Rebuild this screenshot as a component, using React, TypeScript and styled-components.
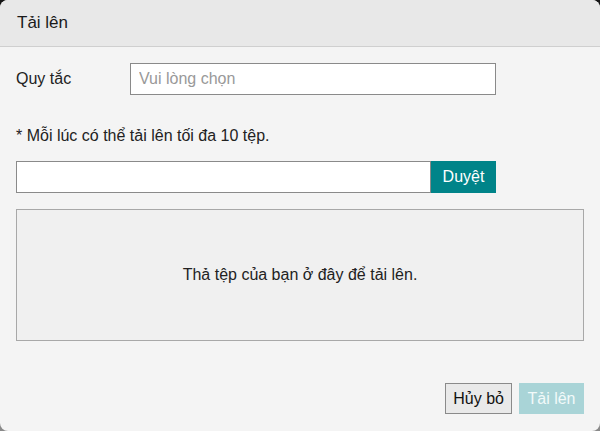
import React from "react";
import styled, { createGlobalStyle } from "styled-components";

const GlobalStyle = createGlobalStyle`
  html, body {
    margin: 0;
    padding: 0;
    background: linear-gradient(180deg, #151515 0%, #555 60%, #8a8a8a 100%);
    font-family: "Liberation Sans", Arial, sans-serif;
  }
  * {
    box-sizing: border-box;
  }
`;

const Dialog = styled.div`
  width: 600px;
  height: 431px;
  background-color: #f4f4f4;
  border-radius: 8px;
  overflow: hidden;
  display: flex;
  flex-direction: column;
  color: #222;
`;

const Header = styled.div`
  height: 47px;
  flex: none;
  display: flex;
  align-items: center;
  padding: 0 17px;
  background-color: #e8e8e8;
  border-bottom: 1px solid #cfcfcf;
  font-size: 17px;
  color: #1a1a1a;
`;

const Body = styled.div`
  flex: 1;
  padding: 16px 16px 0 16px;
  display: flex;
  flex-direction: column;
`;

const FieldRow = styled.div`
  display: flex;
  align-items: center;
  height: 32px;
`;

const Label = styled.label`
  width: 114px;
  font-size: 16px;
  color: #222;
`;

const SelectBox = styled.input`
  width: 366px;
  height: 32px;
  border: 1px solid #8a8a8a;
  background: #fff;
  padding: 0 8px;
  font-size: 16px;
  font-family: inherit;
  outline: none;
  &::placeholder {
    color: #999;
  }
`;

const Note = styled.p`
  margin: 32px 0 0;
  font-size: 16px;
  line-height: 18px;
  color: #222;
`;

const FileRow = styled.div`
  display: flex;
  margin-top: 16px;
  height: 32px;
`;

const FileInput = styled.input`
  width: 415px;
  height: 32px;
  border: 1px solid #8a8a8a;
  background: #fff;
  outline: none;
`;

const BrowseButton = styled.button`
  width: 65px;
  height: 32px;
  border: none;
  background-color: #008489;
  color: #fff;
  font-family: inherit;
  font-size: 16px;
  padding: 0;
  cursor: pointer;
`;

const DropZone = styled.div`
  margin-top: 16px;
  width: 568px;
  height: 132px;
  border: 1px solid #a8a8a8;
  background-color: #f0f0f0;
  display: flex;
  align-items: center;
  justify-content: center;
  font-size: 16px;
  color: #222;
`;

const Footer = styled.div`
  display: flex;
  justify-content: flex-end;
  gap: 7px;
  padding: 0 16px 17px;
`;

const Button = styled.button<{ $primary?: boolean }>`
  height: 31px;
  padding: 0 7px;
  font-family: inherit;
  font-size: 16px;
  cursor: pointer;
  border: ${(p) => (p.$primary ? "none" : "1px solid #8a8a8a")};
  background-color: ${(p) => (p.$primary ? "#a9d4d7" : "#e9e9e9")};
  color: ${(p) => (p.$primary ? "#f2fafa" : "#111")};
  min-width: 65px;
`;

export default function App() {
  return (
    <>
      <GlobalStyle />
      <Dialog>
        <Header>Tải lên</Header>
        <Body>
          <FieldRow>
            <Label>Quy tắc</Label>
            <SelectBox readOnly placeholder="Vui lòng chọn" />
          </FieldRow>
          <Note>* Mỗi lúc có thể tải lên tối đa 10 tệp.</Note>
          <FileRow>
            <FileInput readOnly />
            <BrowseButton>Duyệt</BrowseButton>
          </FileRow>
          <DropZone>Thả tệp của bạn ở đây để tải lên.</DropZone>
        </Body>
        <Footer>
          <Button>Hủy bỏ</Button>
          <Button $primary>Tải lên</Button>
        </Footer>
      </Dialog>
    </>
  );
}
